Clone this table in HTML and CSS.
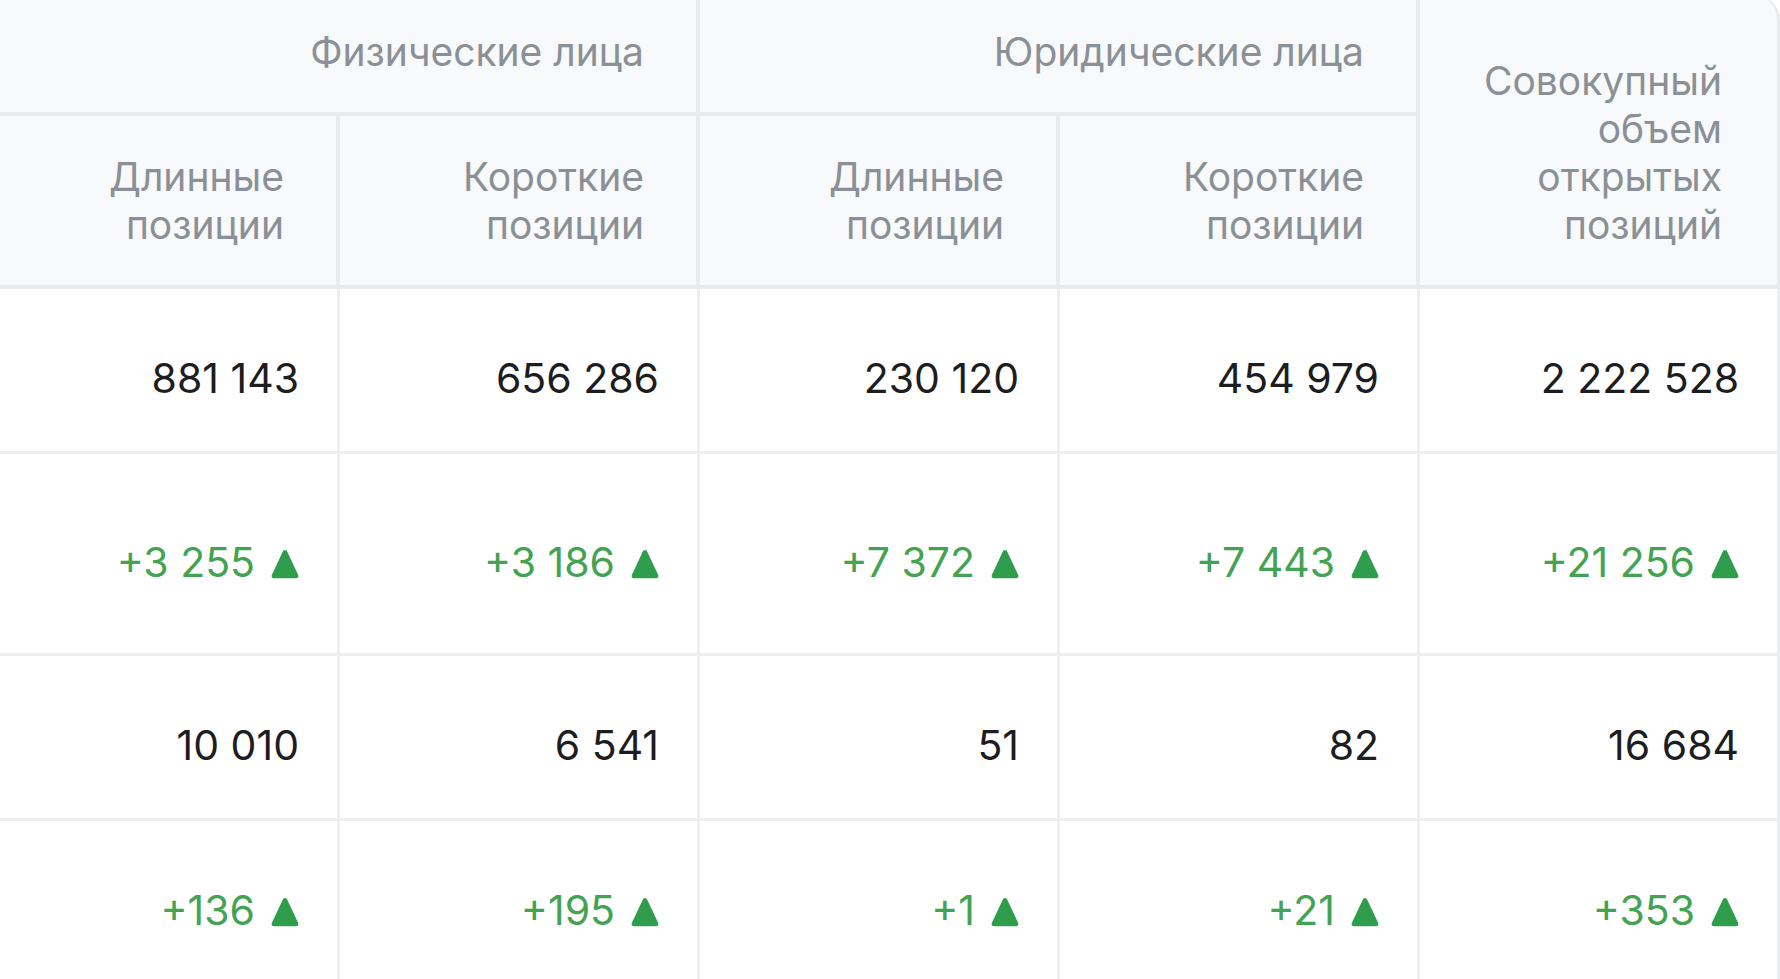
FILE: index.html
```html
<!DOCTYPE html>
<html lang="ru">
<head>
<meta charset="utf-8">
<title>Открытые позиции</title>
<link rel="stylesheet" href="styles.css">
</head>
<body>
<table class="positions">
  <colgroup>
    <col class="c-first">
    <col class="c-std">
    <col class="c-std">
    <col class="c-std">
    <col class="c-std">
  </colgroup>
  <thead>
    <tr class="group-row">
      <th class="group" colspan="2">Физические лица</th>
      <th class="group" colspan="2">Юридические лица</th>
      <th class="total" rowspan="2">Совокупный объем открытых позиций</th>
    </tr>
    <tr class="sub-row">
      <th class="sub">Длинные позиции</th>
      <th class="sub">Короткие позиции</th>
      <th class="sub">Длинные позиции</th>
      <th class="sub">Короткие позиции</th>
    </tr>
  </thead>
  <tbody>
    <tr class="row">
      <td>881 143</td>
      <td>656 286</td>
      <td>230 120</td>
      <td>454 979</td>
      <td>2 222 528</td>
    </tr>
    <tr class="row row-tall delta">
      <td>+3 255<svg class="up" viewBox="0 0 28 30"><path d="M14 1C15.2 1 15.9 1.8 16.4 2.9L27.2 26C27.9 27.6 27 29.3 25.1 29.3H2.9C1 29.3 0.1 27.6 0.8 26L11.6 2.9C12.1 1.8 12.8 1 14 1Z"/></svg></td>
      <td>+3 186<svg class="up" viewBox="0 0 28 30"><path d="M14 1C15.2 1 15.9 1.8 16.4 2.9L27.2 26C27.9 27.6 27 29.3 25.1 29.3H2.9C1 29.3 0.1 27.6 0.8 26L11.6 2.9C12.1 1.8 12.8 1 14 1Z"/></svg></td>
      <td>+7 372<svg class="up" viewBox="0 0 28 30"><path d="M14 1C15.2 1 15.9 1.8 16.4 2.9L27.2 26C27.9 27.6 27 29.3 25.1 29.3H2.9C1 29.3 0.1 27.6 0.8 26L11.6 2.9C12.1 1.8 12.8 1 14 1Z"/></svg></td>
      <td>+7 443<svg class="up" viewBox="0 0 28 30"><path d="M14 1C15.2 1 15.9 1.8 16.4 2.9L27.2 26C27.9 27.6 27 29.3 25.1 29.3H2.9C1 29.3 0.1 27.6 0.8 26L11.6 2.9C12.1 1.8 12.8 1 14 1Z"/></svg></td>
      <td>+21 256<svg class="up" viewBox="0 0 28 30"><path d="M14 1C15.2 1 15.9 1.8 16.4 2.9L27.2 26C27.9 27.6 27 29.3 25.1 29.3H2.9C1 29.3 0.1 27.6 0.8 26L11.6 2.9C12.1 1.8 12.8 1 14 1Z"/></svg></td>
    </tr>
    <tr class="row">
      <td>10 010</td>
      <td>6 541</td>
      <td>51</td>
      <td>82</td>
      <td>16 684</td>
    </tr>
    <tr class="row delta">
      <td>+136<svg class="up" viewBox="0 0 28 30"><path d="M14 1C15.2 1 15.9 1.8 16.4 2.9L27.2 26C27.9 27.6 27 29.3 25.1 29.3H2.9C1 29.3 0.1 27.6 0.8 26L11.6 2.9C12.1 1.8 12.8 1 14 1Z"/></svg></td>
      <td>+195<svg class="up" viewBox="0 0 28 30"><path d="M14 1C15.2 1 15.9 1.8 16.4 2.9L27.2 26C27.9 27.6 27 29.3 25.1 29.3H2.9C1 29.3 0.1 27.6 0.8 26L11.6 2.9C12.1 1.8 12.8 1 14 1Z"/></svg></td>
      <td>+1<svg class="up" viewBox="0 0 28 30"><path d="M14 1C15.2 1 15.9 1.8 16.4 2.9L27.2 26C27.9 27.6 27 29.3 25.1 29.3H2.9C1 29.3 0.1 27.6 0.8 26L11.6 2.9C12.1 1.8 12.8 1 14 1Z"/></svg></td>
      <td>+21<svg class="up" viewBox="0 0 28 30"><path d="M14 1C15.2 1 15.9 1.8 16.4 2.9L27.2 26C27.9 27.6 27 29.3 25.1 29.3H2.9C1 29.3 0.1 27.6 0.8 26L11.6 2.9C12.1 1.8 12.8 1 14 1Z"/></svg></td>
      <td>+353<svg class="up" viewBox="0 0 28 30"><path d="M14 1C15.2 1 15.9 1.8 16.4 2.9L27.2 26C27.9 27.6 27 29.3 25.1 29.3H2.9C1 29.3 0.1 27.6 0.8 26L11.6 2.9C12.1 1.8 12.8 1 14 1Z"/></svg></td>
    </tr>
  </tbody>
</table>
</body>
</html>
```
FILE: styles.css
```css
html, body {
  margin: 0;
  padding: 0;
  background: #ffffff;
}

body {
  font-family: Inter, "Noto Sans", "Liberation Sans", sans-serif;
  overflow: hidden;
}

.positions {
  border-collapse: separate;
  border-spacing: 0;
  table-layout: fixed;
  width: 1780px;
  margin-top: -4px;
}

.c-first { width: 340px; }
.c-std { width: 360px; }

.positions th {
  box-sizing: border-box;
  background: #f7f9fb;
  color: #8b9096;
  font-weight: 400;
  font-size: 39px;
  line-height: 48px;
  text-align: right;
  vertical-align: bottom;
  padding: 0 52px 36px 40px;
  border-right: 4px solid #e8eaed;
  border-bottom: 4px solid #e8eaed;
}

.group-row th.group {
  height: 120px;
}

.sub-row th {
  height: 173px;
}

.positions th.total {
  border-right-width: 3px;
  border-top-right-radius: 24px;
  padding-right: 55px;
}

.positions td {
  box-sizing: border-box;
  height: 165px;
  background: #ffffff;
  color: #1d1d1f;
  font-size: 41px;
  line-height: 48px;
  text-align: right;
  vertical-align: middle;
  white-space: nowrap;
  padding: 16px 38px 0 20px;
  border-right: 3px solid #eceef1;
  border-bottom: 3px solid #eceef1;
}

.row-tall td {
  height: 202px;
}

.delta td {
  color: #44a253;
}

.up {
  width: 28px;
  height: 30px;
  margin-left: 16px;
  vertical-align: -2px;
  fill: #2f9d4c;
}
```
